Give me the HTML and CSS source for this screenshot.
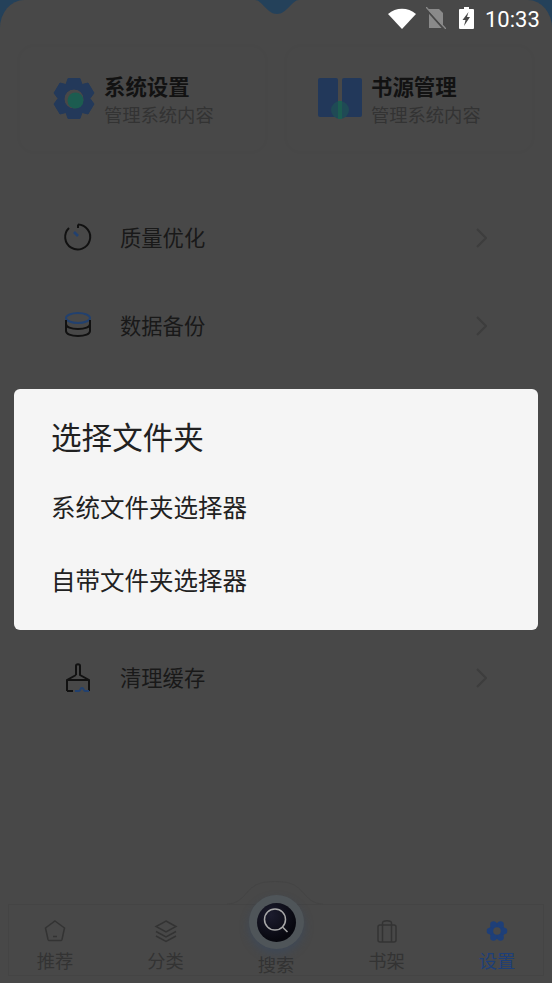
FILE: index.html
```html
<!DOCTYPE html>
<html lang="zh-CN">
<head>
  <meta charset="UTF-8">
  <meta name="viewport" content="width=device-width, initial-scale=1.0">
  <title>设置</title>
  <link rel="stylesheet" href="styles.css">
</head>
<body>
  <div class="phone">
    <div class="sheet">
      <svg class="notch" width="44" height="15" viewBox="0 0 44 15"><path d="M0 0C7 0 12 14 22 14C32 14 37 0 44 0Z"/></svg>

      <div class="cards">
        <div class="card">
          <svg class="card-icon" width="46" height="46" viewBox="0 0 46 46">
            <path class="gear" fill-rule="evenodd" d="M17 2.500h12l2 6 6-1.500 6 10-4 5.500 4 5.500-6 10-6-1.500-2 6H17l-2-6-6 1.500-6-10 4-5.500-4-5.500 6-10 6 1.500z M23 13a10 10 0 1 0 0 20a10 10 0 1 0 0-20z"/>
            <circle class="green" cx="24.500" cy="24.500" r="8"/>
          </svg>
          <div>
            <div class="card-title">系统设置</div>
            <div class="card-sub">管理系统内容</div>
          </div>
        </div>
        <div class="card">
          <svg class="card-icon" width="46" height="46" viewBox="0 0 46 46">
            <rect class="blue" x="0" y="2" width="20" height="39" rx="2"/>
            <rect class="blue" x="24" y="2" width="20" height="39" rx="2"/>
            <circle class="green-soft" cx="22" cy="34" r="9"/>
            <rect class="green" x="20" y="25" width="4" height="18"/>
          </svg>
          <div>
            <div class="card-title">书源管理</div>
            <div class="card-sub">管理系统内容</div>
          </div>
        </div>
      </div>

      <div class="menu">
        <div class="row">
          <svg class="row-icon" width="30" height="30" viewBox="0 0 30 30">
            <path class="line" d="M15 2.500A12.500 12.500 0 1 1 6 6"/>
            <path class="line" d="M15 2.500V6"/>
            <path class="needle thick" d="M11 10L15 14"/>
          </svg>
          <span class="row-text">质量优化</span>
          <svg class="chevron" width="12" height="20" viewBox="0 0 12 20"><path d="M2 1l9 9-9 9"/></svg>
        </div>
        <div class="row">
          <svg class="row-icon" width="30" height="30" viewBox="0 0 30 30">
            <ellipse class="needle" cx="15" cy="8" rx="12" ry="5"/>
            <path class="line" d="M3 10v4c0 3 5 5 12 5s12-2 12-5v-4"/>
            <path class="line" d="M3 14v7c0 3 5 5 12 5s12-2 12-5v-7"/>
          </svg>
          <span class="row-text">数据备份</span>
          <svg class="chevron" width="12" height="20" viewBox="0 0 12 20"><path d="M2 1l9 9-9 9"/></svg>
        </div>
        <div class="row"></div>
        <div class="row"></div>
        <div class="row"></div>
        <div class="row">
          <svg class="row-icon" width="30" height="30" viewBox="0 0 30 30">
            <path class="line" d="M13 13V4c0-2.500 4-2.500 4 0v9l9 5v11"/>
            <path class="line" d="M13 13l-9 5v11"/>
            <path class="line" d="M4 18h22"/>
            <path class="line" d="M4 29h6"/>
            <path class="needle" d="M12 29h4c1.500 0 1-3 3-3s1.500 3 3 3h4"/>
          </svg>
          <span class="row-text">清理缓存</span>
          <svg class="chevron" width="12" height="20" viewBox="0 0 12 20"><path d="M2 1l9 9-9 9"/></svg>
        </div>
      </div>

      <div class="nav">
        <svg class="bump" width="96" height="25" viewBox="0 0 96 25"><path d="M0 23C18 23 18 6 34 2C42 0 54 0 62 2C78 6 78 23 96 23"/></svg>
        <div class="nav-item">
          <svg width="24" height="24" viewBox="0 0 24 24">
            <path class="nav-line" d="M12 2l9.500 7-2.500 11.500a1.500 1.500 0 0 1-1.500 1H6.500a1.500 1.500 0 0 1-1.500-1L2.500 9z"/>
            <path class="nav-line" d="M10 17.500h4"/>
          </svg>
          <span>推荐</span>
        </div>
        <div class="nav-item">
          <svg width="24" height="24" viewBox="0 0 24 24">
            <path class="nav-line" d="M12 2l10 5.500-10 5.500L2 7.500z"/>
            <path class="nav-line" d="M2 12.500l10 5.500 10-5.500"/>
            <path class="nav-line" d="M2 17l10 5.500L22 17"/>
          </svg>
          <span>分类</span>
        </div>
        <div class="nav-item nav-search">
          <div class="search-ring">
            <div class="search-ball">
              <svg width="28" height="28" viewBox="0 0 28 28">
                <circle class="search-line" cx="13" cy="11.500" r="10.500"/>
                <path class="search-line" d="M20.500 19l5 5"/>
              </svg>
            </div>
          </div>
          <span>搜索</span>
        </div>
        <div class="nav-item">
          <svg width="24" height="24" viewBox="0 0 24 24">
            <rect class="nav-line" x="3" y="6" width="18" height="17" rx="2"/>
            <path class="nav-line" d="M7.500 23V4c0-3 9-3 9 0v19"/>
          </svg>
          <span>书架</span>
        </div>
        <div class="nav-item active">
          <svg width="24" height="24" viewBox="0 0 24 24">
            <circle class="nav-fill" cx="12" cy="12" r="8"/>
            <circle class="nav-fill" cx="19" cy="12" r="3.300"/>
            <circle class="nav-fill" cx="5" cy="12" r="3.300"/>
            <circle class="nav-fill" cx="15.500" cy="5.500" r="3.300"/>
            <circle class="nav-fill" cx="8.500" cy="5.500" r="3.300"/>
            <circle class="nav-fill" cx="15.500" cy="18.500" r="3.300"/>
            <circle class="nav-fill" cx="8.500" cy="18.500" r="3.300"/>
            <circle class="nav-hole" cx="12" cy="12" r="3.800"/>
          </svg>
          <span>设置</span>
        </div>
      </div>
    </div>

    <div class="overlay">
      <div class="dialog">
        <div class="dialog-title">选择文件夹</div>
        <div class="dialog-item">系统文件夹选择器</div>
        <div class="dialog-item">自带文件夹选择器</div>
      </div>
    </div>

    <div class="status">
      <svg class="wifi" width="28" height="22" viewBox="0 0 28 22"><path class="white" d="M0 7C8 0 20 0 28 7L14 22Z"/></svg>
      <svg class="sim" width="20" height="22" viewBox="0 0 20 22">
        <path class="grey" d="M3 2h10l4 4v15H3z"/>
        <path class="cut" d="M-1 1L17 21"/>
        <path class="slash" d="M0 0l20 22"/>
      </svg>
      <svg class="battery" width="15" height="22" viewBox="0 0 15 22">
        <path class="white" fill-rule="evenodd" d="M5 0h5v2h4a1 1 0 0 1 1 1v18a1 1 0 0 1-1 1H1a1 1 0 0 1-1-1V3a1 1 0 0 1 1-1h4z M9.500 5L3.500 13h3l-1.500 6 6-9H8z"/>
      </svg>
      <span class="time">10:33</span>
    </div>
  </div>
</body>
</html>
```

FILE: styles.css
```css
body {
  margin: 0;
  font-family: "Noto Sans CJK SC", "Noto Sans", sans-serif;
}
.phone {
  position: relative;
  width: 552px;
  height: 983px;
  overflow: hidden;
  background: #24415a;
}
.sheet {
  position: relative;
  display: flex;
  flex-direction: column;
  height: 983px;
  box-sizing: border-box;
  background: #484848;
  border-radius: 24px 24px 0 0 / 28px 28px 0 0;
}
.notch {
  position: absolute;
  top: 0;
  left: 255px;
}
.notch path {
  fill: #24415a;
}

/* top cards */
.cards {
  display: grid;
  grid-template-columns: 245px 245px;
  gap: 22px;
  padding: 47px 0 0 20px;
}
.card {
  display: flex;
  align-items: center;
  gap: 7px;
  height: 104px;
  padding-left: 31px;
  box-sizing: border-box;
  border-radius: 14px;
  box-shadow: 0 0 6px rgba(0, 0, 0, 0.025);
}
.card-icon .gear {
  fill: #23395a;
  stroke: #23395a;
  stroke-width: 1;
  stroke-linejoin: round;
}
.card-icon .blue {
  fill: #22385a;
}
.card-icon .green {
  fill: #1c5c50;
}
.card-icon .green-soft {
  fill: #1f4a55;
}
.card-title {
  font-size: 21.400px;
  line-height: 27px;
  font-weight: 700;
  color: #121212;
}
.card-sub {
  margin-top: 2px;
  font-size: 18.300px;
  line-height: 26px;
  color: #333;
}

/* menu */
.menu {
  padding: 42px 65px 0 63px;
}
.row {
  display: flex;
  align-items: center;
  height: 88px;
}
.row-icon {
  flex: none;
  margin-right: 27px;
}
.row-text {
  flex: 1;
  margin-bottom: 2px;
  font-size: 21.300px;
  color: #191919;
}
.chevron {
  margin-top: 1px;
}
.chevron path {
  fill: none;
  stroke: #3d3d3d;
  stroke-width: 2;
}
.line {
  fill: none;
  stroke: #111;
  stroke-width: 2;
}
.needle {
  fill: none;
  stroke: #22416f;
  stroke-width: 2;
}
.thick {
  stroke-width: 2.600;
}

/* bottom nav */
.nav {
  position: relative;
  display: grid;
  grid-template-columns: repeat(5, 110.500px);
  justify-content: center;
  margin: auto 8px 7px;
  height: 72px;
  box-sizing: border-box;
  border: 1px solid #444;
}
.bump {
  position: absolute;
  top: -24px;
  left: 218px;
}
.bump path {
  fill: #484848;
  stroke: #444;
}
.nav-item {
  position: relative;
  display: flex;
  flex-direction: column;
  align-items: center;
  padding-top: 14px;
  font-size: 18.300px;
  line-height: 24px;
  color: #333;
}
.nav-item svg {
  display: block;
}
.nav-item span {
  margin-top: 5px;
}
.nav-line {
  fill: none;
  stroke: #333;
  stroke-width: 1.500;
}
.nav-fill {
  fill: #1e3f78;
}
.nav-hole {
  fill: #484848;
}
.active {
  color: #1e3f78;
}
.nav-search span {
  margin-top: 33px;
}
.search-ring {
  position: absolute;
  top: -10px;
  display: flex;
  align-items: center;
  justify-content: center;
  width: 55px;
  height: 54px;
  border-radius: 50%;
  background: #4f5559;
  box-shadow: 0 5px 10px rgba(50, 75, 110, 0.4);
}
.search-ball {
  display: flex;
  align-items: center;
  justify-content: center;
  width: 39px;
  height: 39px;
  border-radius: 50%;
  background: radial-gradient(circle at 35% 30%, #1c1c2e, #07070e 70%);
}
.search-line {
  fill: none;
  stroke: #a8a8a8;
  stroke-width: 1.500;
}

/* dialog */
.overlay {
  position: absolute;
  inset: 0;
  display: flex;
  align-items: center;
  justify-content: center;
  padding-top: 36px;
  box-sizing: border-box;
}
.dialog {
  width: 524px;
  height: 241px;
  box-sizing: border-box;
  padding: 25px 37px 0;
  background: #f5f5f5;
  border-radius: 6px;
  color: #212121;
}
.dialog-title {
  font-size: 30.600px;
  line-height: 44px;
  margin-bottom: 12px;
}
.dialog-item {
  font-size: 24.500px;
  line-height: 73px;
  height: 73px;
}

/* status bar */
.status {
  position: absolute;
  top: 7px;
  left: 388px;
  display: flex;
  align-items: center;
  height: 22px;
  color: #fff;
}
.wifi {
  margin-right: 10px;
}
.sim {
  margin-right: 13px;
}
.battery {
  margin-right: 11px;
}
.white {
  fill: #fff;
}
.grey {
  fill: #8a8a8a;
}
.cut {
  stroke: #484848;
  stroke-width: 2;
}
.slash {
  stroke: #8a8a8a;
  stroke-width: 1.400;
}
.time {
  margin-top: 2px;
  font-family: Roboto, sans-serif;
  font-size: 22px;
}
```
